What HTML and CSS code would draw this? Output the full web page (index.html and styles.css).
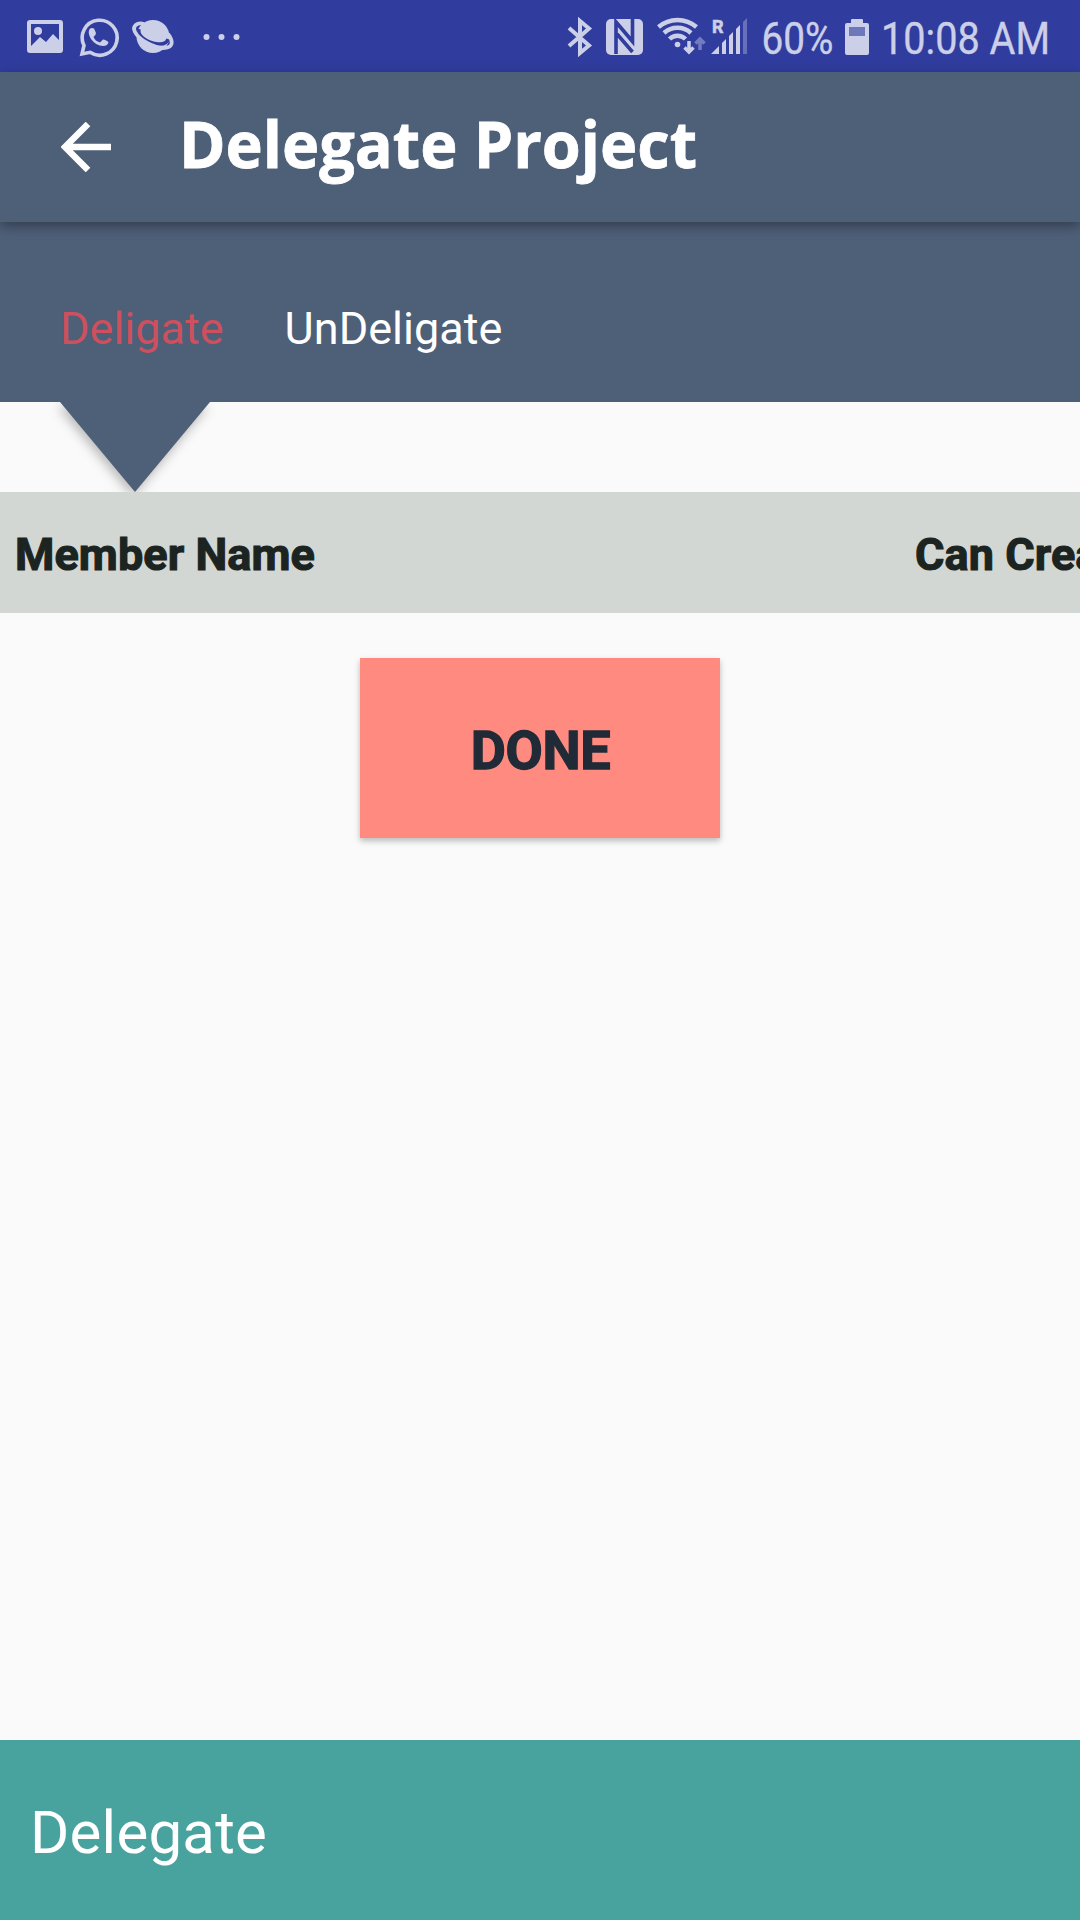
FILE: index.html
```html
<!DOCTYPE html>
<html lang="en">
<head>
<meta charset="utf-8">
<title>Delegate Project</title>
<link rel="stylesheet" href="styles.css">
</head>
<body>
<div class="screen">
  <div class="status-bar">
    <svg class="status-icons" width="260" height="72" viewBox="0 0 260 72">
      <path fill-rule="evenodd" d="M30 20H60Q63 20 63 23V50Q63 53 60 53H30Q27 53 27 50V23Q27 20 30 20ZM31 24V46L40 37L46 42L53 34L59 40V24Z"/>
      <circle cx="38" cy="31" r="4"/>
      <path class="line" stroke-width="3.6" d="M82 54L84 45.500A17.500 17.500 0 1 1 90 52.300Z"/>
      <path d="M90 28.500Q92 27.500 94 28.500L96 33Q96 35 93.500 37Q95 41 100 42.500L103 39.500Q105 39 108.500 42Q108 46 103 46Q96 46 91 39Q87 32 90 28.500Z"/>
      <circle cx="153" cy="36.500" r="16.500"/>
      <path class="ring-gap" d="M139 29C137 37 149 43 158 44C163 44.500 167 43 168 39"/>
      <path class="line" stroke-width="3.800" d="M144 24C137 22 132 26 135 32C139 40 154 48 163 48C173 48 174 42 168 34"/>
      <g><circle cx="206.500" cy="37" r="3"/><circle cx="221.500" cy="37" r="3"/><circle cx="236.500" cy="37" r="3"/></g>
    </svg>
    <svg class="status-icons" width="520" height="72" viewBox="560 0 520 72">
      <path class="line" stroke-width="4" d="M569 28L589 45.500L580 53V21L589 28.500L569 46"/>
      <rect x="606" y="19" width="37" height="36" rx="5"/>
      <path class="nfc-cut" d="M616 54V22L632.500 41.500V19M617 34L632.500 52"/>
      <path class="line" stroke-width="1.500" d="M619 31L632.500 47"/>
      <path class="line" stroke-width="4.500" d="M658.500 27A29 29 0 0 1 696.500 27M664 33A20 20 0 0 1 691 33M669.500 39A11.500 11.500 0 0 1 685.500 39"/>
      <circle cx="677.500" cy="44.500" r="2.800"/>
      <path class="line" stroke-width="3.500" d="M689 41V52M684.500 47.500L689 52L693.500 47.500"/>
      <path class="line dim" stroke-width="3.500" d="M700 50V39M695.500 43.500L700 39L704.500 43.500"/>
      <text class="roaming" x="712" y="33">R</text>
      <path d="M711 54L719 46V54ZM722 43L726 39V54H722ZM729 36L733 32V54H729ZM736 29L740 25V54H736Z"/>
      <path class="dim-fill" d="M743 22L747 18V54H743Z"/>
      <text class="status-text" x="761.500" y="54" textLength="72" lengthAdjust="spacingAndGlyphs">60%</text>
      <path d="M847 23H851V20Q851 19 852 19H862Q863 19 863 20V23H867Q869 23 869 25V53Q869 55 867 55H847Q845 55 845 53V25Q845 23 847 23Z"/>
      <rect class="battery-empty" x="849" y="27" width="16" height="9"/>
      <text class="status-text" x="881" y="54" textLength="169" lengthAdjust="spacingAndGlyphs">10:08 AM</text>
    </svg>
  </div>

  <header class="toolbar">
    <svg class="back" width="50" height="50" viewBox="0 0 50 50"><path d="M50 25H4M27 2L4 25L27 48"/></svg>
    <svg class="title" width="530" height="90" viewBox="0 0 530 90"><text x="-4" y="66" textLength="518" lengthAdjust="spacingAndGlyphs">Delegate Project</text></svg>
  </header>

  <nav class="tabs">
    <span class="tab active">Deligate</span>
    <span class="tab">UnDeligate</span>
  </nav>

  <div class="pointer-row">
    <svg class="pointer" width="150" height="90" viewBox="0 0 150 90"><path d="M0 0H150L75 90Z"/></svg>
  </div>

  <div class="table-head">
    <span class="name-column">Member Name</span>
    <span>Can Create</span>
  </div>

  <main class="content">
    <button class="done">DONE</button>
  </main>

  <footer class="footer">Delegate</footer>
</div>
</body>
</html>
```
FILE: styles.css
```css
* { box-sizing: border-box; }

body {
  margin: 0;
  font-family: Roboto, "Liberation Sans", sans-serif;
}

.screen {
  display: flex;
  flex-direction: column;
  width: 1080px;
  height: 1920px;
  overflow: hidden;
  background: #fafafa;
}

.status-bar {
  display: flex;
  justify-content: space-between;
  flex: 0 0 72px;
  background: #303d9e;
}

.status-icons { fill: #cbcfe8; }
.line { fill: none; stroke: #cbcfe8; }
.ring-gap { fill: none; stroke: #303d9e; stroke-width: 3.5; }
.nfc-cut { fill: none; stroke: #303d9e; stroke-width: 3.6; }
.dim { stroke: #737cc0; }
.dim-fill { fill: #6770b8; }
.battery-empty { fill: #6d77bb; }
.status-text { font-size: 45px; stroke: #cbcfe8; stroke-width: 0.4; }
.roaming { font-size: 18px; font-weight: 700; stroke: #cbcfe8; stroke-width: 0.6; }

.toolbar {
  display: flex;
  align-items: center;
  flex: 0 0 150px;
  padding: 0 61px;
  gap: 72px;
  background: #4e5f78;
  box-shadow: 0 4px 12px rgba(0, 0, 0, 0.36);
  z-index: 1;
}

.back path { fill: none; stroke: #fff; stroke-width: 6.5; }

.title {
  overflow: visible;
  fill: #fff;
  stroke: #fff;
  stroke-width: 0.8;
  font-family: "Open Sans", "Noto Sans", sans-serif;
  font-size: 65px;
  font-weight: 700;
}

.tabs {
  display: flex;
  align-items: center;
  flex: 0 0 180px;
  padding: 32px 60px 0;
  gap: 61px;
  background: #4e5f78;
  color: #fff;
  font-size: 45px;
}

.active { color: #cc505e; }

.pointer-row {
  flex: 0 0 90px;
  padding-left: 60px;
  overflow: hidden;
}

.pointer {
  display: block;
  overflow: visible;
  fill: #4e5f78;
  filter: drop-shadow(-2px 4px 6px rgba(0, 0, 0, 0.28));
}

.table-head {
  display: flex;
  align-items: center;
  flex: 0 0 121px;
  padding: 4px 0 0 15px;
  background: #d2d7d3;
  color: #1c2421;
  font-size: 45px;
  font-weight: 700;
  letter-spacing: 0.08px;
  white-space: nowrap;
  -webkit-text-stroke: 1.1px #1c2421;
}

.name-column { flex: 0 0 900px; }

.content {
  display: flex;
  flex: 1;
  align-items: flex-start;
  justify-content: center;
  padding-top: 45px;
}

.done {
  width: 360px;
  height: 180px;
  padding: 5px 0 0 1px;
  border: 0;
  background: #ff8a80;
  box-shadow: 0 3px 6px rgba(0, 0, 0, 0.26);
  color: #212b37;
  font: 700 54px Roboto, sans-serif;
  letter-spacing: -0.3px;
  -webkit-text-stroke: 1.3px #212b37;
}

.footer {
  display: flex;
  align-items: center;
  flex: 0 0 180px;
  padding: 4px 30px 0;
  background: #48a29e;
  color: #fff;
  font-size: 60px;
  letter-spacing: 0.2px;
}
```
